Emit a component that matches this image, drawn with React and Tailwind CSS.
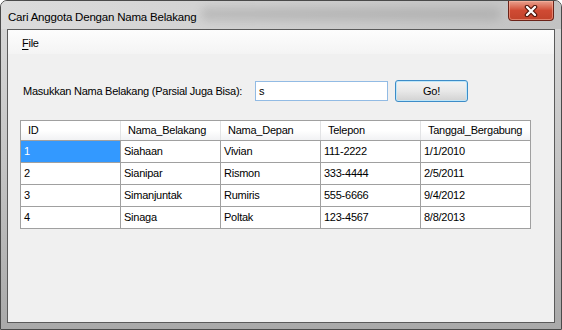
const rows = [
  ["1", "Siahaan", "Vivian", "111-2222", "1/1/2010"],
  ["2", "Sianipar", "Rismon", "333-4444", "2/5/2011"],
  ["3", "Simanjuntak", "Rumiris", "555-6666", "9/4/2012"],
  ["4", "Sinaga", "Poltak", "123-4567", "8/8/2013"],
];

const headers = ["ID", "Nama_Belakang", "Nama_Depan", "Telepon", "Tanggal_Bergabung"];

function CloseButton() {
  return (
    <div className="mr-[7px] flex h-[20px] w-[46px] items-center justify-center rounded-b-[4px] border border-t-0 border-[#6b2218] bg-gradient-to-b from-[#e8a08e] via-[#cf4a33] to-[#c2432b] shadow-[inset_0_0_0_1px_rgba(255,190,170,0.5)]">
      <svg width="16" height="12" viewBox="0 0 16 12">
        <path d="M4 2 L12 10 M12 2 L4 10" stroke="#4a1208" strokeWidth="4.5" strokeLinecap="round" />
        <path d="M4 2 L12 10 M12 2 L4 10" stroke="#ffffff" strokeWidth="2.4" strokeLinecap="round" />
      </svg>
    </div>
  );
}

export default function App() {
  return (
    <div className="flex h-[330px] w-[562px] flex-col overflow-hidden rounded-t-[7px] border border-[#4a4a4a] bg-gradient-to-b from-[#d9d9d9] via-[#c4c4c4] to-[#a9a9a9] font-['Liberation_Sans',Arial,sans-serif] text-[11px] tracking-[-0.25px] text-black">
      {/* title bar */}
      <div className="relative flex h-[28px] shrink-0 items-start justify-between bg-gradient-to-r from-[#dcdcdc] via-[#cfcfcf] to-[#c2c2c2]">
        <div className="pointer-events-none absolute left-[200px] top-[6px] h-[14px] w-[300px] rounded-full bg-[#9a9a9a] opacity-40 blur-[4px]" />
        <span className="relative pl-[7px] pt-[8px] text-[11.5px] tracking-[-0.2px] text-black">
          Cari Anggota Dengan Nama Belakang
        </span>
        <div className="relative">
          <CloseButton />
        </div>
      </div>

      {/* client area */}
      <div className="mx-[6px] mb-[6px] flex flex-1 flex-col border border-[#5a5a5a] bg-[#f0f0f0]">
        <div className="flex h-[24px] items-center bg-gradient-to-b from-[#fdfdfd] to-[#f4f4f4] pl-[14px] pt-[2px]">
          <span>
            <span className="underline underline-offset-2">F</span>ile
          </span>
        </div>

        <div className="mt-[26px] flex h-[22px] items-center">
          <span className="ml-[15px] w-[232px]">Masukkan Nama Belakang (Parsial Juga Bisa):</span>
          <div className="flex h-[20px] w-[133px] items-center border border-[#92bbe4] bg-white pl-[3px]">
            s
          </div>
          <div className="ml-[7px] flex h-[22px] w-[73px] items-center justify-center rounded-[3px] border border-[#3c8cc8] bg-gradient-to-b from-[#f3f3f3] via-[#e8e8e8] to-[#d2d2d2] shadow-[inset_0_0_0_1px_#bfe6f8]">
            Go!
          </div>
        </div>

        <div className="ml-[12px] mt-[18px] w-[511px] border border-[#a0a0a0] bg-white">
          <div className="grid h-[19px] grid-cols-[100px_100px_100px_100px_109px] bg-gradient-to-b from-white via-white to-[#f1f2f4]">
            {headers.map((h, i) => (
              <div
                key={h}
                className={
                  i < 4
                    ? "flex items-center border-r border-[#e2e3e5] pl-[7px]"
                    : "flex items-center pl-[7px]"
                }
              >
                {h}
              </div>
            ))}
          </div>
          {rows.map((r, ri) => (
            <div key={ri} className="grid h-[22px] grid-cols-[100px_100px_100px_100px_109px] border-t border-[#a0a0a0]">
              {r.map((c, ci) => (
                <div
                  key={ci}
                  className={
                    (ci < 4 ? "border-r border-[#a0a0a0] " : "") +
                    (ri === 0 && ci === 0 ? "bg-[#3399ff] text-white " : "") +
                    "flex items-center pl-[3px]"
                  }
                >
                  {c}
                </div>
              ))}
            </div>
          ))}
        </div>
      </div>
    </div>
  );
}
